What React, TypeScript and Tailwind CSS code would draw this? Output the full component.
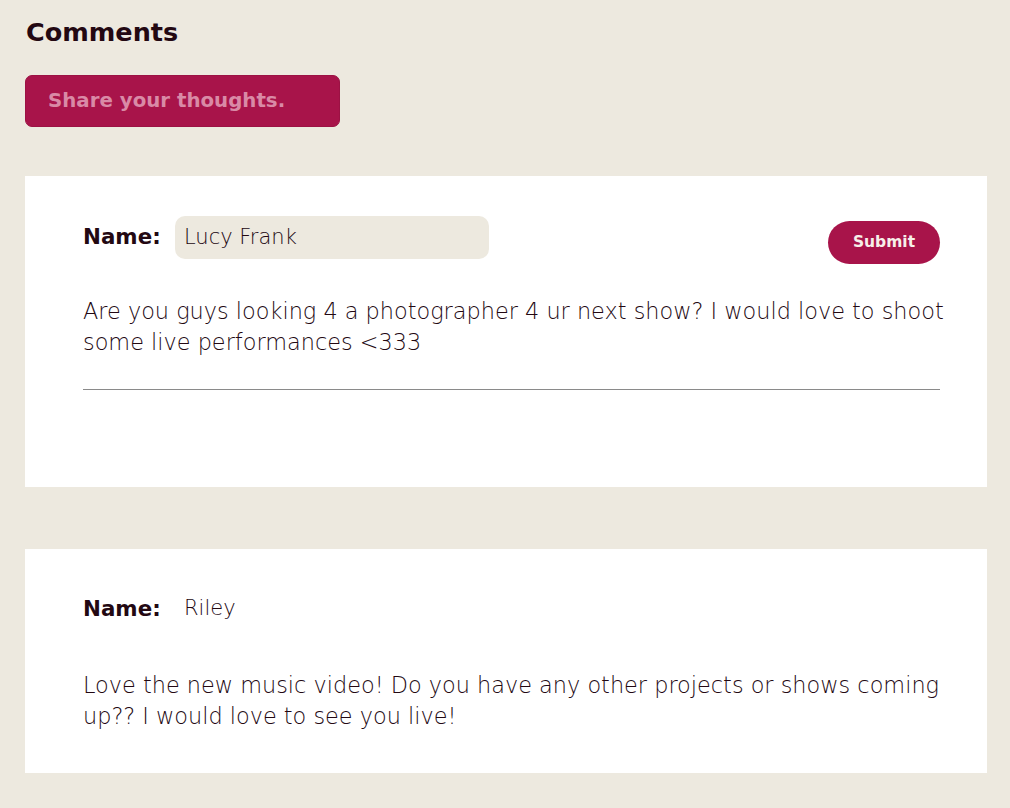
export default function App() {
  const comments = [
    {
      name: "Riley",
      body: "Love the new music video! Do you have any other projects or shows coming up?? I would love to see you live!",
    },
  ];

  return (
    <div
      className="min-h-[808px] bg-[#ede9df] pl-[25px] pr-[23px] pt-[14px] pb-[35px] text-[#230812]"
      style={{ fontFamily: "'DejaVu Sans', Lato, sans-serif" }}
    >
      <h1 className="pl-px text-[25.5px] font-bold leading-[37px]">Comments</h1>

      <button className="mt-[24px] h-[52px] w-[315px] rounded-[7px] border border-[#9c1244] bg-[#a8144a] pl-[22px] text-left text-[19.8px] font-bold text-[#d98aa6]">
        Share your thoughts.
      </button>

      <div className="mt-[49px] h-[311px] bg-white pl-[58px] pr-[47px] pt-[40px]">
        <div className="flex items-start justify-between">
          <div className="flex items-center">
            <span className="w-[92px] text-[21.4px] font-bold">Name:</span>
            <div className="flex h-[43px] w-[314px] items-center rounded-[10px] bg-[#ede9df] pl-[9px] text-[21px] font-extralight">
              Lucy Frank
            </div>
          </div>
          <button className="mt-[5px] h-[43px] w-[112px] rounded-full bg-[#a8144a] text-[15.5px] font-bold text-[#f7efe9]">
            Submit
          </button>
        </div>
        <p className="mt-[32px] w-[870px] text-[22.4px] font-extralight leading-[31px]">
          Are you guys looking 4 a photographer 4 ur next show? I would love to shoot some live performances &lt;333
        </p>
        <div className="mt-[31px] h-px bg-[#8a8a8a]" />
      </div>

      {comments.map((c) => (
        <div key={c.name} className="mt-[62px] h-[224px] bg-white pl-[58px] pr-[47px] pt-[44px]">
          <div className="flex items-center">
            <span className="w-[101px] text-[21.4px] font-bold">Name:</span>
            <span className="text-[21px] font-extralight">{c.name}</span>
          </div>
          <p className="mt-[45px] w-[870px] text-[22.4px] font-extralight leading-[31px]">{c.body}</p>
        </div>
      ))}
    </div>
  );
}
